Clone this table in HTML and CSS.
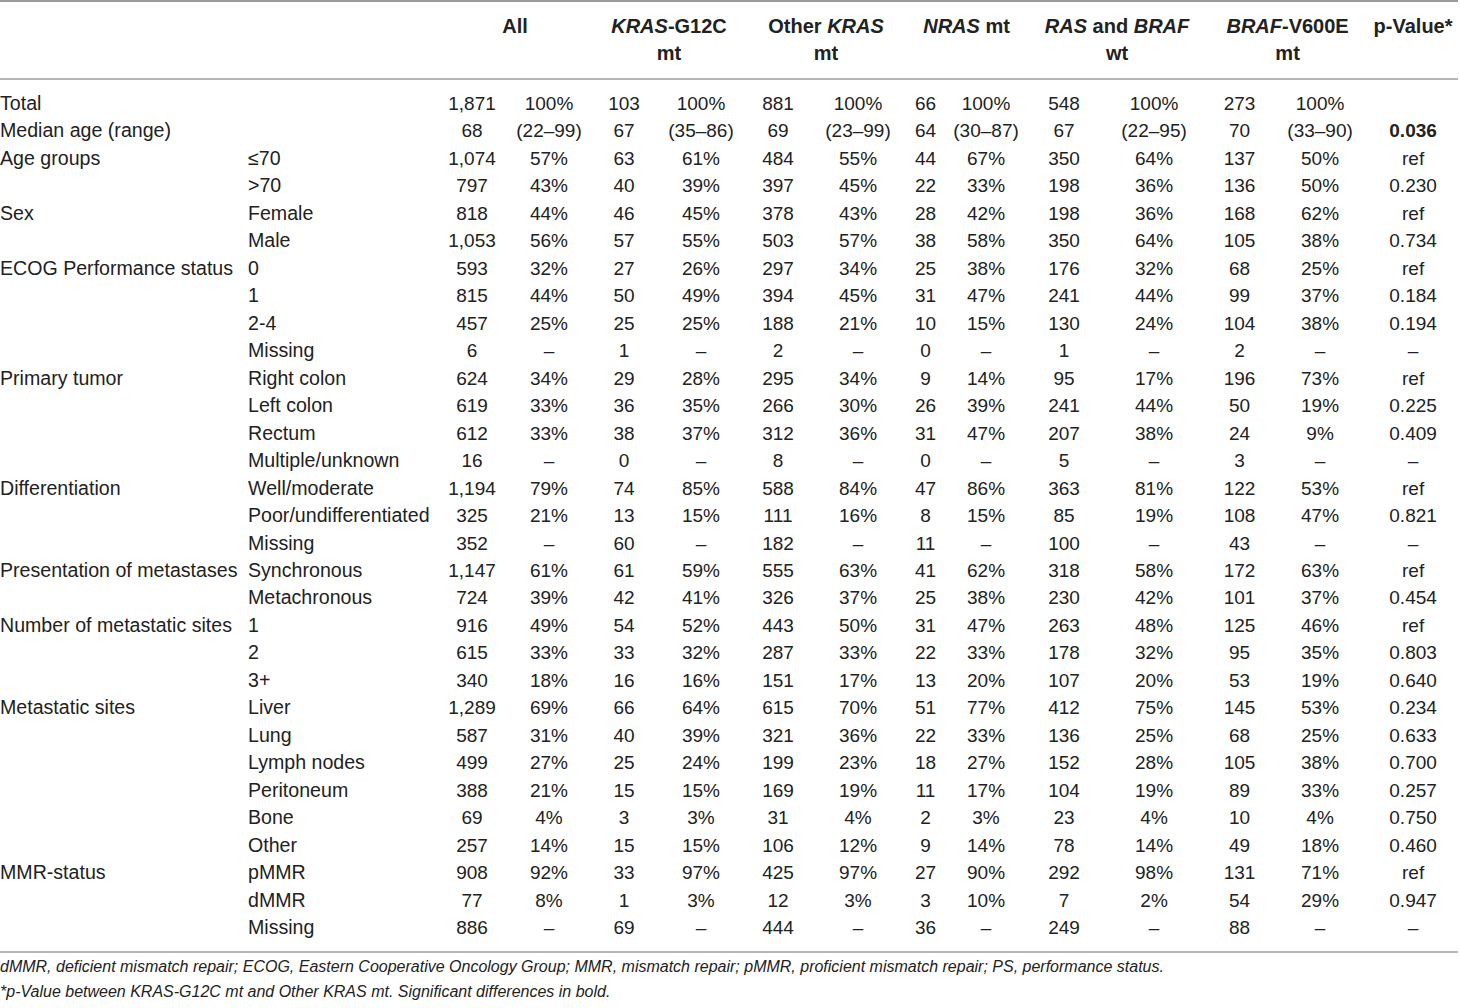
FILE: index.html
```html
<!DOCTYPE html>
<html lang="en">
<head>
<meta charset="utf-8">
<title>Table</title>
<link rel="stylesheet" href="styles.css">
</head>
<body>
<table class="data">
  <colgroup>
    <col class="c-label"><col class="c-sub">
    <col class="c-n1"><col class="c-p1">
    <col class="c-n2"><col class="c-p2">
    <col class="c-n3"><col class="c-p3">
    <col class="c-n4"><col class="c-p4">
    <col class="c-n5"><col class="c-p5">
    <col class="c-n6"><col class="c-p6">
    <col class="c-pv">
  </colgroup>
  <thead>
    <tr>
      <th></th><th></th>
      <th colspan="2">All</th>
      <th colspan="2"><i>KRAS</i>-G12C<br>mt</th>
      <th colspan="2">Other <i>KRAS</i><br>mt</th>
      <th colspan="2"><i>NRAS</i> mt</th>
      <th colspan="2"><i>RAS</i> and <i>BRAF</i><br>wt</th>
      <th colspan="2"><i>BRAF</i>-V600E<br>mt</th>
      <th>p-Value*</th>
    </tr>
  </thead>
  <tbody>
    <tr class="first"><td class="lbl">Total</td><td class="sub"></td><td>1,871</td><td>100%</td><td>103</td><td>100%</td><td>881</td><td>100%</td><td>66</td><td>100%</td><td>548</td><td>100%</td><td>273</td><td>100%</td><td></td></tr>
    <tr><td class="lbl">Median age (range)</td><td class="sub"></td><td>68</td><td>(22–99)</td><td>67</td><td>(35–86)</td><td>69</td><td>(23–99)</td><td>64</td><td>(30–87)</td><td>67</td><td>(22–95)</td><td>70</td><td>(33–90)</td><td><b>0.036</b></td></tr>
    <tr><td class="lbl">Age groups</td><td class="sub">≤70</td><td>1,074</td><td>57%</td><td>63</td><td>61%</td><td>484</td><td>55%</td><td>44</td><td>67%</td><td>350</td><td>64%</td><td>137</td><td>50%</td><td>ref</td></tr>
    <tr><td class="lbl"></td><td class="sub">&gt;70</td><td>797</td><td>43%</td><td>40</td><td>39%</td><td>397</td><td>45%</td><td>22</td><td>33%</td><td>198</td><td>36%</td><td>136</td><td>50%</td><td>0.230</td></tr>
    <tr><td class="lbl">Sex</td><td class="sub">Female</td><td>818</td><td>44%</td><td>46</td><td>45%</td><td>378</td><td>43%</td><td>28</td><td>42%</td><td>198</td><td>36%</td><td>168</td><td>62%</td><td>ref</td></tr>
    <tr><td class="lbl"></td><td class="sub">Male</td><td>1,053</td><td>56%</td><td>57</td><td>55%</td><td>503</td><td>57%</td><td>38</td><td>58%</td><td>350</td><td>64%</td><td>105</td><td>38%</td><td>0.734</td></tr>
    <tr><td class="lbl">ECOG Performance status</td><td class="sub">0</td><td>593</td><td>32%</td><td>27</td><td>26%</td><td>297</td><td>34%</td><td>25</td><td>38%</td><td>176</td><td>32%</td><td>68</td><td>25%</td><td>ref</td></tr>
    <tr><td class="lbl"></td><td class="sub">1</td><td>815</td><td>44%</td><td>50</td><td>49%</td><td>394</td><td>45%</td><td>31</td><td>47%</td><td>241</td><td>44%</td><td>99</td><td>37%</td><td>0.184</td></tr>
    <tr><td class="lbl"></td><td class="sub">2-4</td><td>457</td><td>25%</td><td>25</td><td>25%</td><td>188</td><td>21%</td><td>10</td><td>15%</td><td>130</td><td>24%</td><td>104</td><td>38%</td><td>0.194</td></tr>
    <tr><td class="lbl"></td><td class="sub">Missing</td><td>6</td><td>–</td><td>1</td><td>–</td><td>2</td><td>–</td><td>0</td><td>–</td><td>1</td><td>–</td><td>2</td><td>–</td><td>–</td></tr>
    <tr><td class="lbl">Primary tumor</td><td class="sub">Right colon</td><td>624</td><td>34%</td><td>29</td><td>28%</td><td>295</td><td>34%</td><td>9</td><td>14%</td><td>95</td><td>17%</td><td>196</td><td>73%</td><td>ref</td></tr>
    <tr><td class="lbl"></td><td class="sub">Left colon</td><td>619</td><td>33%</td><td>36</td><td>35%</td><td>266</td><td>30%</td><td>26</td><td>39%</td><td>241</td><td>44%</td><td>50</td><td>19%</td><td>0.225</td></tr>
    <tr><td class="lbl"></td><td class="sub">Rectum</td><td>612</td><td>33%</td><td>38</td><td>37%</td><td>312</td><td>36%</td><td>31</td><td>47%</td><td>207</td><td>38%</td><td>24</td><td>9%</td><td>0.409</td></tr>
    <tr><td class="lbl"></td><td class="sub">Multiple/unknown</td><td>16</td><td>–</td><td>0</td><td>–</td><td>8</td><td>–</td><td>0</td><td>–</td><td>5</td><td>–</td><td>3</td><td>–</td><td>–</td></tr>
    <tr><td class="lbl">Differentiation</td><td class="sub">Well/moderate</td><td>1,194</td><td>79%</td><td>74</td><td>85%</td><td>588</td><td>84%</td><td>47</td><td>86%</td><td>363</td><td>81%</td><td>122</td><td>53%</td><td>ref</td></tr>
    <tr><td class="lbl"></td><td class="sub">Poor/undifferentiated</td><td>325</td><td>21%</td><td>13</td><td>15%</td><td>111</td><td>16%</td><td>8</td><td>15%</td><td>85</td><td>19%</td><td>108</td><td>47%</td><td>0.821</td></tr>
    <tr><td class="lbl"></td><td class="sub">Missing</td><td>352</td><td>–</td><td>60</td><td>–</td><td>182</td><td>–</td><td>11</td><td>–</td><td>100</td><td>–</td><td>43</td><td>–</td><td>–</td></tr>
    <tr><td class="lbl">Presentation of metastases</td><td class="sub">Synchronous</td><td>1,147</td><td>61%</td><td>61</td><td>59%</td><td>555</td><td>63%</td><td>41</td><td>62%</td><td>318</td><td>58%</td><td>172</td><td>63%</td><td>ref</td></tr>
    <tr><td class="lbl"></td><td class="sub">Metachronous</td><td>724</td><td>39%</td><td>42</td><td>41%</td><td>326</td><td>37%</td><td>25</td><td>38%</td><td>230</td><td>42%</td><td>101</td><td>37%</td><td>0.454</td></tr>
    <tr><td class="lbl">Number of metastatic sites</td><td class="sub">1</td><td>916</td><td>49%</td><td>54</td><td>52%</td><td>443</td><td>50%</td><td>31</td><td>47%</td><td>263</td><td>48%</td><td>125</td><td>46%</td><td>ref</td></tr>
    <tr><td class="lbl"></td><td class="sub">2</td><td>615</td><td>33%</td><td>33</td><td>32%</td><td>287</td><td>33%</td><td>22</td><td>33%</td><td>178</td><td>32%</td><td>95</td><td>35%</td><td>0.803</td></tr>
    <tr><td class="lbl"></td><td class="sub">3+</td><td>340</td><td>18%</td><td>16</td><td>16%</td><td>151</td><td>17%</td><td>13</td><td>20%</td><td>107</td><td>20%</td><td>53</td><td>19%</td><td>0.640</td></tr>
    <tr><td class="lbl">Metastatic sites</td><td class="sub">Liver</td><td>1,289</td><td>69%</td><td>66</td><td>64%</td><td>615</td><td>70%</td><td>51</td><td>77%</td><td>412</td><td>75%</td><td>145</td><td>53%</td><td>0.234</td></tr>
    <tr><td class="lbl"></td><td class="sub">Lung</td><td>587</td><td>31%</td><td>40</td><td>39%</td><td>321</td><td>36%</td><td>22</td><td>33%</td><td>136</td><td>25%</td><td>68</td><td>25%</td><td>0.633</td></tr>
    <tr><td class="lbl"></td><td class="sub">Lymph nodes</td><td>499</td><td>27%</td><td>25</td><td>24%</td><td>199</td><td>23%</td><td>18</td><td>27%</td><td>152</td><td>28%</td><td>105</td><td>38%</td><td>0.700</td></tr>
    <tr><td class="lbl"></td><td class="sub">Peritoneum</td><td>388</td><td>21%</td><td>15</td><td>15%</td><td>169</td><td>19%</td><td>11</td><td>17%</td><td>104</td><td>19%</td><td>89</td><td>33%</td><td>0.257</td></tr>
    <tr><td class="lbl"></td><td class="sub">Bone</td><td>69</td><td>4%</td><td>3</td><td>3%</td><td>31</td><td>4%</td><td>2</td><td>3%</td><td>23</td><td>4%</td><td>10</td><td>4%</td><td>0.750</td></tr>
    <tr><td class="lbl"></td><td class="sub">Other</td><td>257</td><td>14%</td><td>15</td><td>15%</td><td>106</td><td>12%</td><td>9</td><td>14%</td><td>78</td><td>14%</td><td>49</td><td>18%</td><td>0.460</td></tr>
    <tr><td class="lbl">MMR-status</td><td class="sub">pMMR</td><td>908</td><td>92%</td><td>33</td><td>97%</td><td>425</td><td>97%</td><td>27</td><td>90%</td><td>292</td><td>98%</td><td>131</td><td>71%</td><td>ref</td></tr>
    <tr><td class="lbl"></td><td class="sub">dMMR</td><td>77</td><td>8%</td><td>1</td><td>3%</td><td>12</td><td>3%</td><td>3</td><td>10%</td><td>7</td><td>2%</td><td>54</td><td>29%</td><td>0.947</td></tr>
    <tr class="last"><td class="lbl"></td><td class="sub">Missing</td><td>886</td><td>–</td><td>69</td><td>–</td><td>444</td><td>–</td><td>36</td><td>–</td><td>249</td><td>–</td><td>88</td><td>–</td><td>–</td></tr>
  </tbody>
</table>
<div class="notes">
  <p>dMMR, deficient mismatch repair; ECOG, Eastern Cooperative Oncology Group; MMR, mismatch repair; pMMR, proficient mismatch repair; PS, performance status.</p>
  <p>*p-Value between KRAS-G12C mt and Other KRAS mt. Significant differences in bold.</p>
</div>
</body>
</html>
```

FILE: styles.css
```css
html, body {
  margin: 0;
  padding: 0;
  background: #ffffff;
}

body {
  font-family: "Liberation Sans", Arial, Helvetica, sans-serif;
  color: #222222;
  width: 1460px;
}

.data {
  width: 1458px;
  table-layout: fixed;
  border-collapse: collapse;
  border-spacing: 0;
  font-size: 19px;
  border-bottom: 2px solid #b4b4b4;
}

.c-label { width: 247px; }
.c-sub { width: 191px; }
.c-n1 { width: 68px; }
.c-p1 { width: 86px; }
.c-n2 { width: 64px; }
.c-p2 { width: 90px; }
.c-n3 { width: 64px; }
.c-p3 { width: 96px; }
.c-n4 { width: 39px; }
.c-p4 { width: 82px; }
.c-n5 { width: 74px; }
.c-p5 { width: 106px; }
.c-n6 { width: 65px; }
.c-p6 { width: 96px; }
.c-pv { width: 90px; }

.data thead th {
  font-weight: bold;
  font-size: 20px;
  line-height: 27px;
  padding: 11px 0 11px 0;
  text-align: center;
  vertical-align: top;
  border-top: 2px solid #9a9a9a;
  border-bottom: 2px solid #b4b4b4;
  white-space: nowrap;
}

.data tbody td {
  padding: 0;
  height: 27.47px;
  line-height: 27.47px;
  text-align: center;
  white-space: nowrap;
  vertical-align: middle;
}

.data tbody td.lbl {
  text-align: left;
  font-size: 19.6px;
}

.data tbody td.sub {
  text-align: left;
  font-size: 19.6px;
  padding-left: 1px;
}

.data tbody tr.first td {
  padding-top: 10px;
}

.data tbody tr.last td {
  padding-bottom: 9px;
}

.data b {
  font-weight: bold;
}

.notes {
  font-style: italic;
  font-size: 16px;
  line-height: 25px;
  padding-top: 1px;
}

.notes p {
  margin: 0;
}
```
